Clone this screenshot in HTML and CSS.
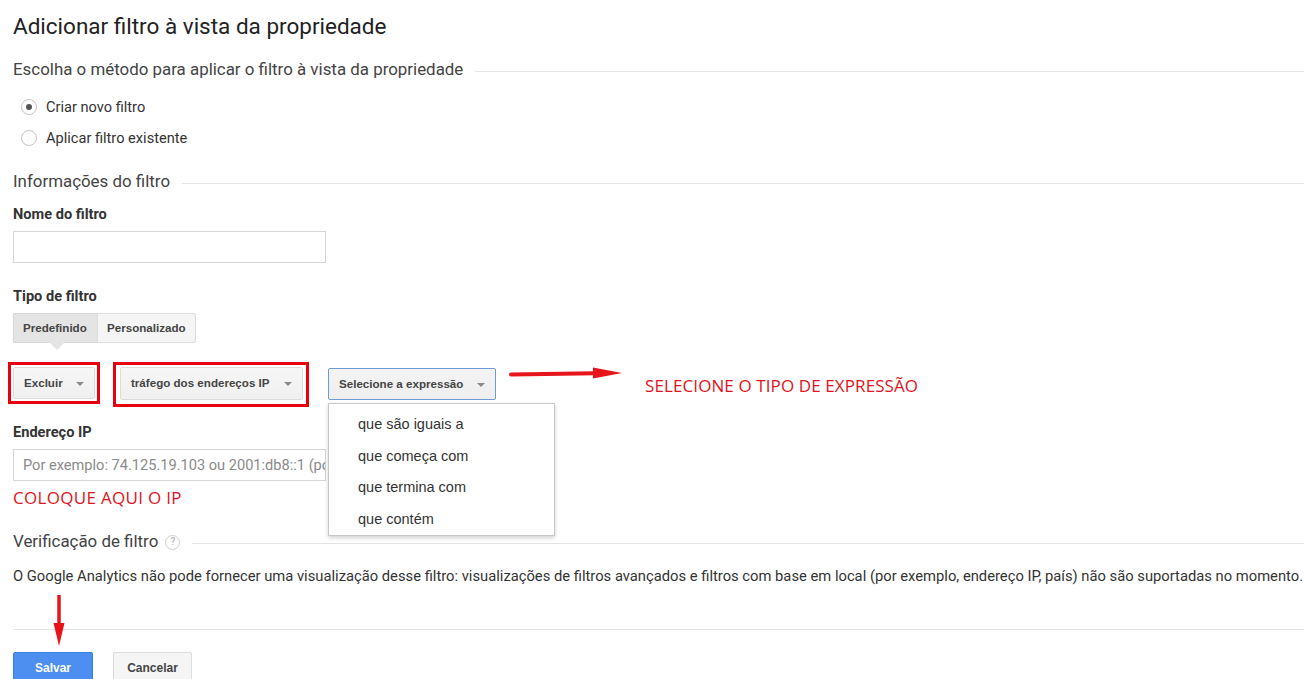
FILE: index.html
```html
<!DOCTYPE html>
<html lang="pt">
<head>
<meta charset="utf-8">
<title>Adicionar filtro</title>
<link rel="stylesheet" href="styles.css">
</head>
<body>
<div class="page">
  <h1 class="title">Adicionar filtro à vista da propriedade</h1>

  <div class="section-head s1"><span>Escolha o método para aplicar o filtro à vista da propriedade</span><i class="rule"></i></div>

  <div class="radios">
    <label class="radio"><span class="dot checked"></span><span>Criar novo filtro</span></label>
    <label class="radio r2"><span class="dot"></span><span>Aplicar filtro existente</span></label>
  </div>

  <div class="section-head s2"><span>Informações do filtro</span><i class="rule"></i></div>

  <div class="label l1">Nome do filtro</div>
  <div class="input"></div>

  <div class="label l2">Tipo de filtro</div>
  <div class="tabs">
    <div class="tab active">Predefinido</div>
    <div class="tab">Personalizado</div>
  </div>

  <div class="select-row">
    <div class="mark m1"><div class="btn w1">Excluir<span class="caret"></span></div></div>
    <div class="mark m2"><div class="btn w2">tráfego dos endereços IP<span class="caret"></span></div></div>
    <div class="expr-wrap">
      <div class="btn w3 focus">Selecione a expressão<span class="caret"></span></div>
      <ul class="menu">
        <li>que são iguais a</li>
        <li>que começa com</li>
        <li>que termina com</li>
        <li>que contém</li>
      </ul>
    </div>
    <svg class="arrow-right" width="114" height="16" viewBox="0 0 114 16">
      <path d="M2 8.5 L86 7.2" stroke="#e8141c" stroke-width="4" stroke-linecap="round" fill="none"/>
      <path d="M84 1.5 L113 7 L84 12.5 Z" fill="#e8141c"/>
    </svg>
    <div class="note note-expr">SELECIONE O TIPO DE EXPRESSÃO</div>
  </div>

  <div class="label l3">Endereço IP</div>
  <div class="input placeholder">Por exemplo: 74.125.19.103 ou 2001:db8::1 (por exemplo)</div>
  <div class="note note-ip">COLOQUE AQUI O IP</div>

  <div class="section-head s3"><span>Verificação de filtro</span><span class="help">?</span><i class="rule"></i></div>
  <p class="info">O Google Analytics não pode fornecer uma visualização desse filtro: visualizações de filtros avançados e filtros com base em local (por exemplo, endereço IP, país) não são suportadas no momento.</p>

  <div class="footer">
    <svg class="arrow-down" width="14" height="52" viewBox="0 0 14 52">
      <path d="M7 1 L7 30" stroke="#e8141c" stroke-width="3.5" stroke-linecap="round"/>
      <path d="M1.5 28 L7 51 L12.5 28 Z" fill="#e8141c"/>
    </svg>
    <div class="actions">
      <div class="action primary">Salvar</div>
      <div class="action">Cancelar</div>
    </div>
  </div>
</div>
</body>
</html>
```

FILE: styles.css
```css
* { box-sizing: border-box; }
html, body { margin: 0; padding: 0; background: #fff; }
body {
  font-family: Roboto, "Noto Sans", Arial, sans-serif;
  color: #333;
  width: 1304px;
  height: 679px;
  overflow: hidden;
}
.page { padding: 12px 0 0 13px; position: relative; }

.title {
  margin: 0;
  font-size: 22.5px;
  line-height: 28px;
  font-weight: 400;
  color: #222;
}

.section-head {
  display: flex;
  align-items: center;
  font-size: 16.9px;
  line-height: 20px;
  color: #444;
}
.section-head .rule {
  flex: 1;
  height: 1px;
  background: #e3e3e3;
  margin-left: 12px;
  margin-top: 4px;
}
.s1 { margin-top: 19px; }
.s2 { margin-top: 23px; }
.s3 { margin-top: 23px; }

.radios { margin-top: 18px; }
.radio {
  display: flex;
  align-items: center;
  font-size: 14.6px;
  line-height: 20px;
  color: #333;
  padding-left: 8px;
}
.radio.r2 { margin-top: 11px; }
.dot {
  width: 16px;
  height: 16px;
  border: 1px solid #c4c4c4;
  border-radius: 50%;
  margin-right: 9px;
  display: flex;
  align-items: center;
  justify-content: center;
  background: #fff;
}
.dot.checked::after {
  content: "";
  width: 6px;
  height: 6px;
  border-radius: 50%;
  background: #555;
}

.label {
  font-size: 14.6px;
  line-height: 18px;
  font-weight: 700;
  color: #333;
}
.l1 { margin-top: 14px; }
.l2 { margin-top: 24px; }
.l3 { margin-top: 16px; }

.input {
  margin-top: 8px;
  width: 313px;
  height: 32px;
  border: 1px solid #d6d6d6;
  background: #fff;
}
.input.placeholder {
  font-size: 14.6px;
  color: #8a8a8a;
  line-height: 30px;
  padding-left: 9px;
  white-space: nowrap;
  overflow: hidden;
}

.tabs {
  margin-top: 8px;
  display: flex;
}
.tab {
  position: relative;
  height: 30px;
  line-height: 28px;
  font-family: "Liberation Sans", Arial, sans-serif;
  font-size: 11.6px;
  font-weight: 700;
  color: #444;
  background: #f5f5f5;
  border: 1px solid #dcdcdc;
  padding: 0 9px;
}
.tab:first-child { width: 84px; border-right: 0; border-radius: 2px 0 0 2px; }
.tab:last-child { width: 99px; border-radius: 0 2px 2px 0; }
.tab.active { background: #e4e4e4; border-color: #d6d6d6; }
.tab.active::after {
  content: "";
  position: absolute;
  left: 35px;
  bottom: -8px;
  width: 0;
  height: 0;
  border-left: 8px solid transparent;
  border-right: 8px solid transparent;
  border-top: 8px solid #e4e4e4;
}

.select-row {
  margin-top: 19px;
  margin-left: -5px;
  display: flex;
  align-items: flex-start;
  position: relative;
}
.mark {
  border: 3px solid #e8000f;
}
.m1 { padding: 2px; width: 92px; height: 42px; }
.m2 { padding: 2px 3px 4px 4px; width: 196px; height: 45px; margin-left: 13px; }

.btn {
  position: relative;
  height: 32px;
  line-height: 30px;
  font-family: "Liberation Sans", Arial, sans-serif;
  font-size: 11.6px;
  font-weight: 700;
  color: #444;
  background: linear-gradient(#f6f6f6, #f0f0f0);
  border: 1px solid #dcdcdc;
  border-radius: 2px;
  padding-left: 10px;
  white-space: nowrap;
}
.w1 { width: 82px; }
.w2 { width: 183px; height: 33px; }
.w3 { width: 168px; }
.btn.focus { border-color: #6f9ad8; background: linear-gradient(#f4f4f4, #eeeeee); }
.caret {
  position: absolute;
  right: 10px;
  top: 14px;
  width: 0;
  height: 0;
  border-left: 4px solid transparent;
  border-right: 4px solid transparent;
  border-top: 4px solid #888;
}

.expr-wrap {
  position: relative;
  margin-left: 19px;
  margin-top: 6px;
}
.menu {
  position: absolute;
  left: 0;
  top: 35px;
  width: 227px;
  height: 133px;
  margin: 0;
  padding: 5px 0 0 0;
  list-style: none;
  background: #fff;
  border: 1px solid #c8c8c8;
  box-shadow: 0 2px 4px rgba(0,0,0,0.18);
  z-index: 2;
}
.menu li {
  font-family: "Liberation Sans", Arial, sans-serif;
  font-size: 14.5px;
  line-height: 31.5px;
  color: #333;
  padding-left: 29px;
}

.arrow-right { margin-left: 13px; margin-top: 4px; }

.note {
  font-family: "Open Sans", "Noto Sans", sans-serif;
  color: #df1420;
  font-size: 17px;
  line-height: 20px;
}
.note-expr { margin-left: 22px; margin-top: 14px; letter-spacing: 0.1px; }
.note-ip { margin-top: 7px; letter-spacing: 0.3px; }

.help {
  display: inline-flex;
  align-items: center;
  justify-content: center;
  width: 15px;
  height: 15px;
  border: 1px solid #cfcfcf;
  border-radius: 50%;
  font-size: 10px;
  color: #aaa;
  margin-left: 7px;
  margin-top: 2px;
}

.info {
  margin: 15px 0 0 -13px;
  padding-left: 13px;
  font-size: 14.75px;
  line-height: 20px;
  color: #333;
  white-space: nowrap;
}

.footer {
  position: relative;
  margin-top: 43px;
  border-top: 1px solid #e3e3e3;
}
.arrow-down {
  position: absolute;
  left: 39px;
  top: -35px;
}
.actions {
  display: flex;
  margin-top: 22px;
}
.action {
  height: 32px;
  line-height: 30px;
  font-family: "Liberation Sans", Arial, sans-serif;
  font-size: 12px;
  font-weight: 700;
  color: #444;
  background: #f5f5f5;
  border: 1px solid #dcdcdc;
  border-radius: 2px;
  text-align: center;
  width: 79px;
  margin-left: 20px;
}
.action.primary {
  margin-left: 0;
  width: 80px;
  background: #4d8ff0;
  border-color: #3d7fe0;
  color: #fff;
}
```
